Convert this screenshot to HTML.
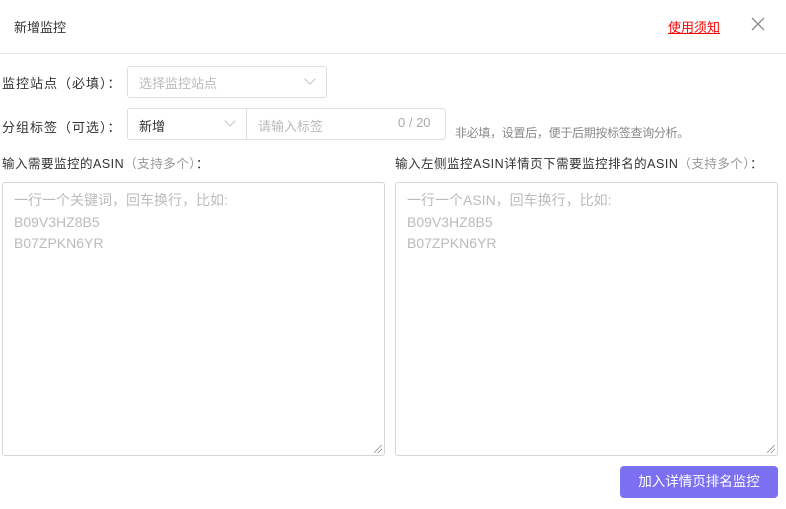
<!DOCTYPE html>
<html><head><meta charset="utf-8"><style>
*{box-sizing:border-box;margin:0;padding:0}
body{width:786px;height:509px;background:#fff;font-family:"Liberation Sans","Noto Sans CJK SC",sans-serif;color:#333;position:relative;overflow:hidden}
.a{position:absolute;white-space:nowrap}
.box{position:absolute;border:1px solid #dcdfe6;border-radius:3px;background:#fff}
.chev{position:absolute;width:8px;height:8px;border-right:1px solid #c0c4cc;border-bottom:1px solid #c0c4cc;transform:rotate(45deg)}
.ta{position:absolute;border:1px solid #d6d6d6;border-radius:3px;padding:7px 11px;font-size:14px;line-height:21.5px;color:#bbb}
.grip{position:absolute;right:2px;bottom:2px;width:8px;height:8px;background:linear-gradient(135deg,transparent 45%,#888 46%,#888 52%,transparent 53%,transparent 70%,#888 71%,#888 77%,transparent 78%)}
</style></head><body>
<div class="a" style="left:14px;top:17px;font-size:13px;color:#333">新增监控</div>
<div class="a" style="left:668px;top:17px;font-size:13px;color:#f00;text-decoration:underline">使用须知</div>
<svg class="a" style="left:751px;top:17px" width="14" height="14" viewBox="0 0 14 14"><path d="M1 1L13 13M13 1L1 13" stroke="#888" stroke-width="1.3" fill="none"/></svg>
<div class="a" style="left:0;top:53px;width:786px;height:1px;background:#e8e8e8"></div>

<div class="a" style="left:2px;top:73px;font-size:13px;letter-spacing:1px">监控站点（必填）：</div>
<div class="box" style="left:127px;top:66px;width:200px;height:32px"></div>
<div class="a" style="left:139px;top:73px;font-size:13px;color:#bbb">选择监控站点</div>
<div class="chev" style="left:306px;top:75px"></div>

<div class="a" style="left:2px;top:117px;font-size:13px;letter-spacing:1px">分组标签（可选）：</div>
<div class="box" style="left:127px;top:108px;width:319px;height:32px"></div>
<div class="a" style="left:246px;top:108px;width:1px;height:32px;background:#dcdfe6"></div>
<div class="a" style="left:139px;top:116px;font-size:13px;color:#333">新增</div>
<div class="chev" style="left:226px;top:117px"></div>
<div class="a" style="left:258px;top:116px;font-size:13px;color:#bbb">请输入标签</div>
<div class="a" style="left:398px;top:115px;font-size:13px;color:#aaa">0 / 20</div>
<div class="a" style="left:455px;top:124px;font-size:12px;color:#888;letter-spacing:-0.3px">非必填，设置后，便于后期按标签查询分析。</div>

<div class="a" style="left:2px;top:153px;font-size:12.5px;letter-spacing:0.5px">输入需要监控的ASIN<span style="color:#999">（支持多个）</span>：</div>
<div class="a" style="left:395px;top:153px;font-size:12.5px;letter-spacing:0.5px">输入左侧监控ASIN详情页下需要监控排名的ASIN<span style="color:#999">（支持多个）</span>：</div>

<div class="ta" style="left:2px;top:182px;width:383px;height:274px">一行一个关键词，回车换行，比如:<br>B09V3HZ8B5<br>B07ZPKN6YR<div class="grip"></div></div>
<div class="ta" style="left:395px;top:182px;width:383px;height:274px">一行一个ASIN，回车换行，比如:<br>B09V3HZ8B5<br>B07ZPKN6YR<div class="grip"></div></div>

<div class="a" style="left:620px;top:466px;width:158px;height:32px;background:#7b70f2;border-radius:4px;color:#fff;font-size:13.5px;text-align:center;line-height:32px">加入详情页排名监控</div>
</body></html>
